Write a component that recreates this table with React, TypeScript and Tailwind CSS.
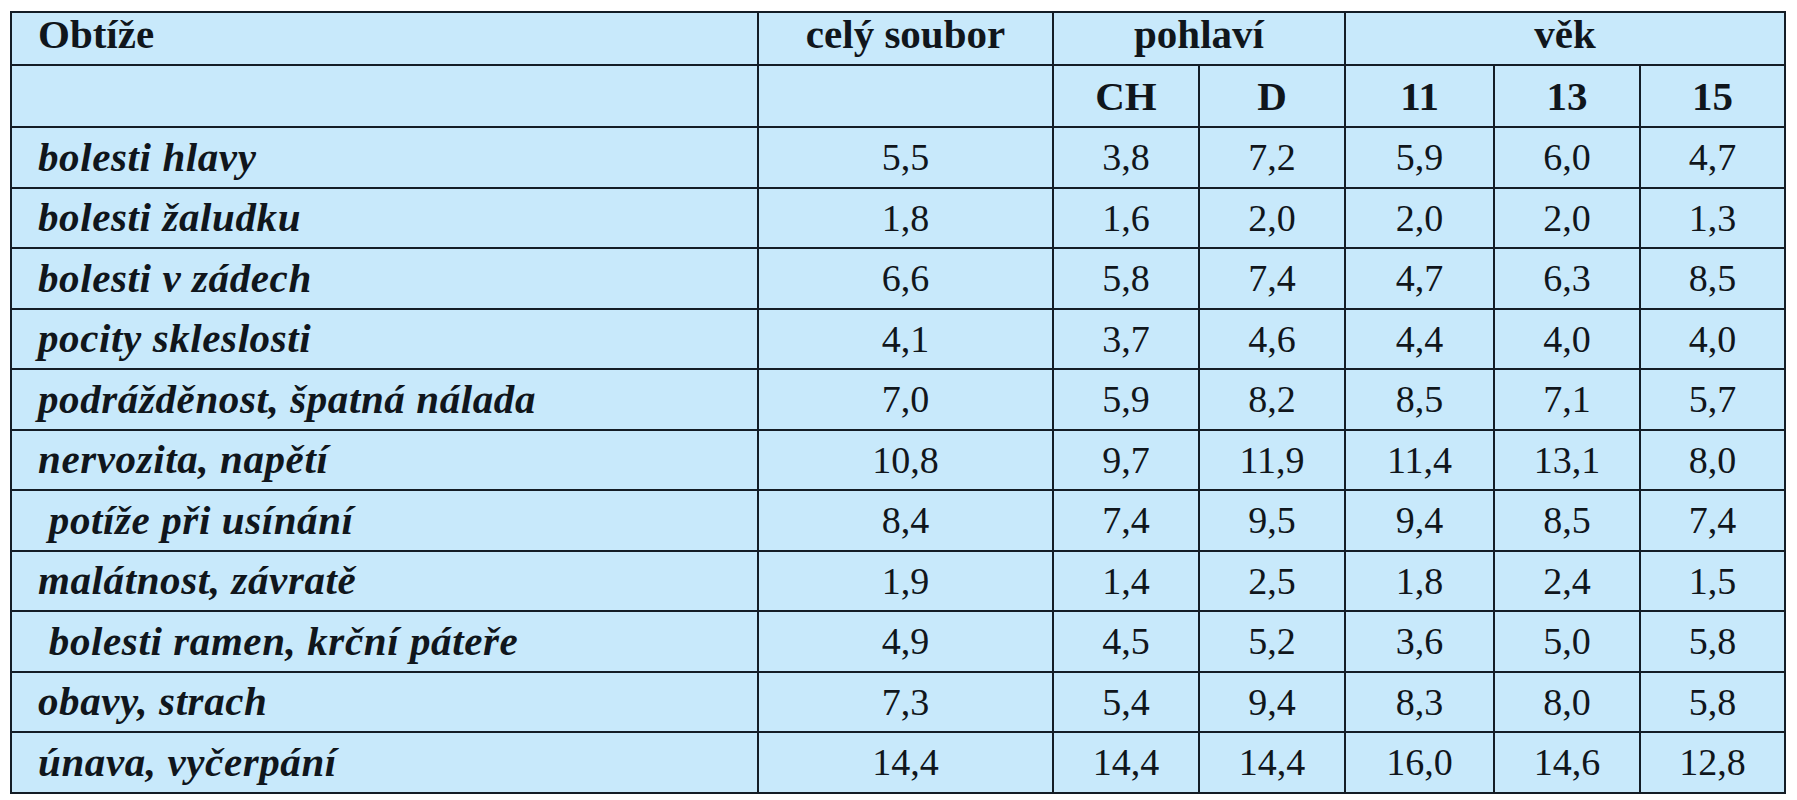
const rows: { label: string; values: string[] }[] = [
  { label: "bolesti hlavy", values: ["5,5", "3,8", "7,2", "5,9", "6,0", "4,7"] },
  { label: "bolesti žaludku", values: ["1,8", "1,6", "2,0", "2,0", "2,0", "1,3"] },
  { label: "bolesti v zádech", values: ["6,6", "5,8", "7,4", "4,7", "6,3", "8,5"] },
  { label: "pocity skleslosti", values: ["4,1", "3,7", "4,6", "4,4", "4,0", "4,0"] },
  { label: "podrážděnost, špatná nálada", values: ["7,0", "5,9", "8,2", "8,5", "7,1", "5,7"] },
  { label: "nervozita, napětí", values: ["10,8", "9,7", "11,9", "11,4", "13,1", "8,0"] },
  { label: "\u00a0potíže při usínání", values: ["8,4", "7,4", "9,5", "9,4", "8,5", "7,4"] },
  { label: "malátnost, závratě", values: ["1,9", "1,4", "2,5", "1,8", "2,4", "1,5"] },
  { label: "\u00a0bolesti ramen, krční páteře", values: ["4,9", "4,5", "5,2", "3,6", "5,0", "5,8"] },
  { label: "obavy, strach", values: ["7,3", "5,4", "9,4", "8,3", "8,0", "5,8"] },
  { label: "únava, vyčerpání", values: ["14,4", "14,4", "14,4", "16,0", "14,6", "12,8"] },
];

const cell = "border-2 border-[#141d26] align-middle";

export default function App() {
  return (
    <div className="min-h-screen bg-white pt-[11px] pl-[10px] font-[family-name:Liberation_Serif,Times_New_Roman,serif] text-[#10161c]">
      <table className="table-fixed border-collapse w-[1774px] bg-[#c8e9fb] text-[38px] leading-none">
        <colgroup>
          <col className="w-[747px]" />
          <col className="w-[295px]" />
          <col className="w-[146px]" />
          <col className="w-[146px]" />
          <col className="w-[149px]" />
          <col className="w-[146px]" />
          <col className="w-[145px]" />
        </colgroup>
        <thead>
          <tr className="h-[53px] font-bold text-[41px]">
            <th className={`${cell} text-left pl-[26px] pb-[8px]`}>Obtíže</th>
            <th className={`${cell} text-center pb-[8px]`}>celý soubor</th>
            <th colSpan={2} className={`${cell} text-center pb-[8px]`}>
              pohlaví
            </th>
            <th colSpan={3} className={`${cell} text-center pb-[8px]`}>
              věk
            </th>
          </tr>
          <tr className="h-[62px] font-bold text-[41px]">
            <th className={cell}></th>
            <th className={cell}></th>
            <th className={`${cell} text-center`}>CH</th>
            <th className={`${cell} text-center`}>D</th>
            <th className={`${cell} text-center`}>11</th>
            <th className={`${cell} text-center`}>13</th>
            <th className={`${cell} text-center`}>15</th>
          </tr>
        </thead>
        <tbody>
          {rows.map((r) => (
            <tr key={r.label} className="h-[60.5px]">
              <td className={`${cell} text-left pl-[26px] font-bold italic text-[41px] tracking-[0.6px] whitespace-pre`}>
                {r.label}
              </td>
              {r.values.map((v, i) => (
                <td key={i} className={`${cell} text-center`}>
                  {v}
                </td>
              ))}
            </tr>
          ))}
        </tbody>
      </table>
    </div>
  );
}
